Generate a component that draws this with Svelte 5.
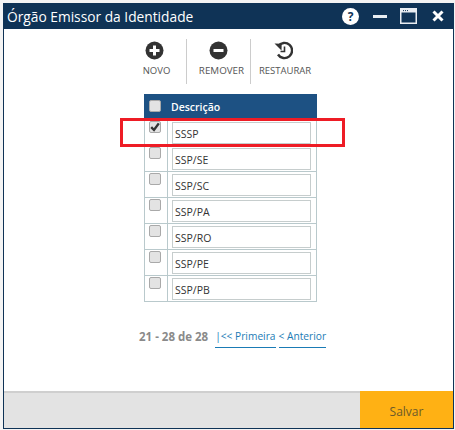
<script>
  const rows = ['SSSP', 'SSP/SE', 'SSP/SC', 'SSP/PA', 'SSP/RO', 'SSP/PE', 'SSP/PB'];
</script>

<div class="page">
  <div class="window">
    <header class="titlebar">
      <h1>Órgão Emissor da Identidade</h1>
      <div class="winctl">
        <span class="help">?</span>
        <span class="min"></span>
        <svg class="max" width="17" height="16" viewBox="0 0 17 16"><rect x="0.75" y="0.75" width="15.5" height="14.5" fill="none" stroke="#e8edf2" stroke-width="1.5"/><rect x="1" y="1" width="15" height="3.5" fill="#e8edf2"/><path d="M3 2.6h1M5 2.6h1M7 2.6h1" stroke="#0f3356" stroke-width="1"/></svg>
        <svg class="close" width="12" height="12" viewBox="0 0 12 12"><path d="M1.5 1.5l9 9M10.5 1.5l-9 9" stroke="#fff" stroke-width="3"/></svg>
      </div>
    </header>

    <main class="content">
      <div class="toolbar">
        <div class="tool t1">
          <svg width="19" height="19" viewBox="0 0 19 19"><circle cx="9.5" cy="9.5" r="9" fill="#333"/><path d="M9.5 4.5v10M4.5 9.5h10" stroke="#fff" stroke-width="3"/></svg>
          <span>NOVO</span>
        </div>
        <div class="tool t2">
          <svg width="19" height="19" viewBox="0 0 19 19"><circle cx="9.5" cy="9.5" r="9" fill="#333"/><path d="M4.5 9.5h10" stroke="#fff" stroke-width="3"/></svg>
          <span>REMOVER</span>
        </div>
        <div class="tool t3">
          <svg width="19" height="19" viewBox="0 0 19 19"><path d="M4.2 5.2A7.6 7.6 0 1 1 4 13.5" fill="none" stroke="#333" stroke-width="2.4"/><path d="M0.5 2.5l7.2 0.2-0.2 6.8z" fill="#333"/><path d="M10.5 5.5v5h-4" fill="none" stroke="#333" stroke-width="1.6"/></svg>
          <span>RESTAURAR</span>
        </div>
      </div>

      <div class="grid">
        <div class="grid-head">
          <span class="cb-cell"><span class="cb"></span></span>
          <span class="head-label">Descrição</span>
        </div>
        {#each rows as row, i}
          <div class="grid-row">
            <span class="cb-cell">
              <span class="cb">
                {#if i === 0}
                  <svg width="10" height="10" viewBox="0 0 10 10"><path d="M1.2 5.2l2.8 2.8 4.8-6.6" fill="none" stroke="#333" stroke-width="2.4"/></svg>
                {/if}
              </span>
            </span>
            <span class="input-cell"><input type="text" value={row} /></span>
          </div>
        {/each}
      </div>

      <div class="pager">
        <span class="count">21 - 28 de 28</span>
        <a href="#p">|&lt;&lt; Primeira</a>
        <a href="#a">&lt; Anterior</a>
      </div>

      <div class="highlight"></div>
    </main>

    <footer class="footer">
      <button type="button">Salvar</button>
    </footer>
  </div>
</div>

<style>
  :global(body) { margin: 0; background: #f4f4f4; }
  .page {
    width: 455px;
    height: 430px;
    padding: 3px 1px 1px 3px;
    box-sizing: border-box;
    font-family: "Open Sans", "Noto Sans", sans-serif;
  }
  .window {
    height: 100%;
    box-sizing: border-box;
    border: 1px solid #0f3356;
    border-top: 0;
    display: flex;
    flex-direction: column;
    background: #fff;
  }
  .titlebar {
    height: 26px;
    flex: none;
    background: #0f3356;
    display: flex;
    align-items: center;
    justify-content: space-between;
    padding: 0 7px 0 4px;
    margin: 0 -1px;
  }
  h1 {
    margin: 0;
    font-size: 13.75px;
    font-weight: 400;
    color: #fff;
  }
  .winctl { display: flex; align-items: center; }
  .help {
    width: 17px;
    height: 17px;
    border-radius: 50%;
    background: #fff;
    color: #0f3356;
    font-size: 12px;
    font-weight: 700;
    line-height: 17px;
    text-align: center;
  }
  .min { width: 14px; height: 3px; background: #e8edf2; margin-left: 14px; }
  .max { margin-left: 13px; }
  .close { margin-left: 15px; margin-right: 3px; }

  .content { flex: 1; position: relative; }
  .toolbar {
    display: flex;
    padding: 10px 0 0 119px;
    height: 55px;
    box-sizing: content-box;
  }
  .tool {
    display: flex;
    flex-direction: column;
    align-items: center;
    height: 45px;
    box-sizing: border-box;
    color: #555;
    font-size: 9.5px;
    gap: 4px;
    line-height: 13px;
  }
  .tool svg { margin-top: 2px; }
  .tool span { margin-left: 4px; }
  .t1 { width: 64px; border-right: 1px solid #ccc; }
  .t2 { width: 64px; border-right: 1px solid #ccc; }
  .t2 span { font-size: 9.8px; margin-left: 6px; }
  .t3 { width: 64px; }
  .grid {
    width: 173px;
    margin: 0 0 0 140px;
    border: solid #b9c9cc;
    border-width: 0 1px;
    box-sizing: border-box;
  }
  .grid-head {
    height: 24px;
    margin: 0 -1px 2px;
    background: #1d5183;
    display: flex;
    align-items: center;
    box-sizing: border-box;
  }
  .head-label { color: #fff; font-size: 10.5px; font-weight: 600; padding-left: 4px; margin-top: 1px; }
  .cb-cell { width: 23px; flex: none; padding-left: 5px; box-sizing: border-box; display: block; }
  .cb {
    display: flex;
    align-items: center;
    justify-content: center;
    width: 12px;
    height: 12px;
    box-sizing: border-box;
    border: 1px solid #a9a9a9;
    border-radius: 2px;
    background: #e3e3e3;
  }
  .grid-row {
    height: 26px;
    display: flex;
    box-sizing: border-box;
    border-bottom: 1px solid #b9c9cc;
  }
  .grid-row .cb-cell { border-right: 1px solid #b9c9cc; padding-top: 1px; padding-left: 4px; }
  .input-cell { flex: 1; padding: 2px 5px 0 4px; }
  input {
    display: block;
    width: 100%;
    height: 22px;
    box-sizing: border-box;
    border: 1px solid #c6cdcd;
    padding: 2px 0 0 2px;
    margin: 0;
    font: 10.5px "Open Sans", "Noto Sans", sans-serif;
    color: #333;
    background: #fff;
    border-radius: 0;
    outline: none;
  }
  .pager {
    display: flex;
    align-items: flex-start;
    margin: 27px 0 0 135px;
    font-size: 10.2px;
  }
  .count { color: #8a8a8a; font-weight: 700; font-size: 11.5px; margin-right: 7px; line-height: 15px; }
  a {
    color: #1a7bb5;
    text-decoration: none;
    border-bottom: 1px solid #1a7bb5;
    padding-bottom: 3px;
    margin-right: 3px;
    line-height: 15px;
  }
  .highlight {
    position: absolute;
    left: 116px;
    top: 89px;
    width: 225px;
    height: 29px;
    box-sizing: border-box;
    border: 3px solid #ee1c25;
    pointer-events: none;
  }
  .footer {
    flex: none;
    height: 37px;
    border-top: 2px solid #cfcfcf;
    background: #e3e3e3;
    display: flex;
    justify-content: flex-end;
    box-sizing: border-box;
  }
  button {
    width: 93px;
    margin: -2px 0 0;
    border: 0;
    background: #ffb114;
    color: #6b5a2a;
    font: 12px "Open Sans", "Noto Sans", sans-serif;
    padding: 4px 0 0;
    cursor: pointer;
  }
</style>
